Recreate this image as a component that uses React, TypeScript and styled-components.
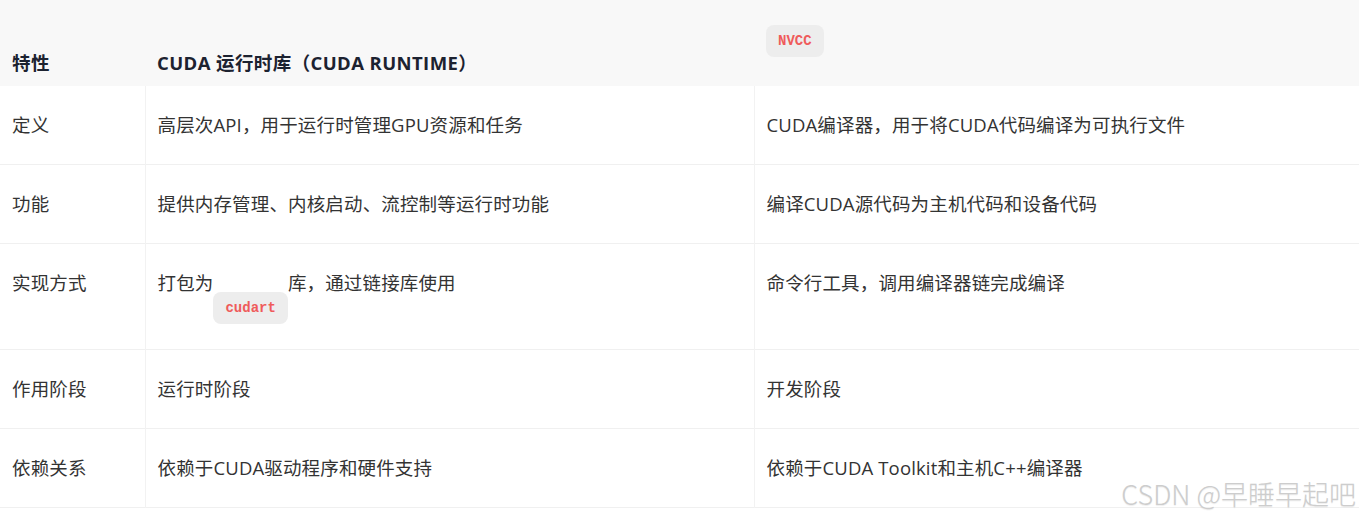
import styled, { createGlobalStyle } from 'styled-components';

const GlobalStyle = createGlobalStyle`
  html, body {
    margin: 0;
    padding: 0;
    background: #ffffff;
  }
  body {
    font-family: "Open Sans", "Noto Sans CJK SC", sans-serif;
    color: #333333;
  }
`;

const Page = styled.div`
  position: relative;
  width: 1359px;
  height: 515px;
  overflow: hidden;
`;

const Table = styled.table`
  width: 1359px;
  table-layout: fixed;
  border-collapse: collapse;
  border-spacing: 0;
  font-size: 18.5px;
  line-height: 28px;
`;

const HeadRow = styled.tr`
  background: #f8f8f8;
`;

const Th = styled.th`
  text-align: left;
  vertical-align: baseline;
  padding: 25px 12px 9px;
  font-weight: 700;
  letter-spacing: 0.4px;
  color: #1c2230;
`;

const Row = styled.tr`
  border-bottom: 1px solid #f0f0f0;
`;

const Td = styled.td<{ $first?: boolean }>`
  vertical-align: baseline;
  padding: 25px 12px;
  color: #333333;
  letter-spacing: 0.15px;
  border-left: ${p => (p.$first ? 'none' : '1px solid #f2f2f2')};
`;

const Code = styled.code<{ $shift: number }>`
  display: inline-block;
  vertical-align: ${p => p.$shift}px;
  padding: 6px 12px;
  line-height: 20px;
  letter-spacing: 0;
  border-radius: 8px;
  background: #ededed;
  color: #ef5b5b;
  font-family: "Liberation Mono", "DejaVu Sans Mono", monospace;
  font-size: 14px;
  font-weight: 700;
`;

const Watermark = styled.div`
  position: absolute;
  right: 3px;
  bottom: 4px;
  font-family: "Noto Sans CJK SC", sans-serif;
  font-weight: 300;
  font-size: 27px;
  line-height: 34px;
  color: #cdcdcd;
  text-shadow: 0 1px 1px rgba(0, 0, 0, 0.07);
  pointer-events: none;
`;

const ROWS: [string, React.ReactNode, string][] = [
  ['定义', '高层次API，用于运行时管理GPU资源和任务', 'CUDA编译器，用于将CUDA代码编译为可执行文件'],
  ['功能', '提供内存管理、内核启动、流控制等运行时功能', '编译CUDA源代码为主机代码和设备代码'],
  [
    '实现方式',
    <>
      打包为<Code $shift={-22}>cudart</Code>库，通过链接库使用
    </>,
    '命令行工具，调用编译器链完成编译',
  ],
  ['作用阶段', '运行时阶段', '开发阶段'],
  ['依赖关系', '依赖于CUDA驱动程序和硬件支持', '依赖于CUDA Toolkit和主机C++编译器'],
];

export default function App() {
  return (
    <Page>
      <GlobalStyle />
      <Table>
        <colgroup>
          <col style={{ width: 145 }} />
          <col style={{ width: 609 }} />
          <col />
        </colgroup>
        <thead>
          <HeadRow>
            <Th>特性</Th>
            <Th>CUDA 运行时库（CUDA RUNTIME）</Th>
            <Th>
              <Code $shift={25}>NVCC</Code>
            </Th>
          </HeadRow>
        </thead>
        <tbody>
          {ROWS.map(([name, runtime, nvcc]) => (
            <Row key={name}>
              <Td $first>{name}</Td>
              <Td>{runtime}</Td>
              <Td>{nvcc}</Td>
            </Row>
          ))}
        </tbody>
      </Table>
      <Watermark>CSDN @早睡早起吧</Watermark>
    </Page>
  );
}
